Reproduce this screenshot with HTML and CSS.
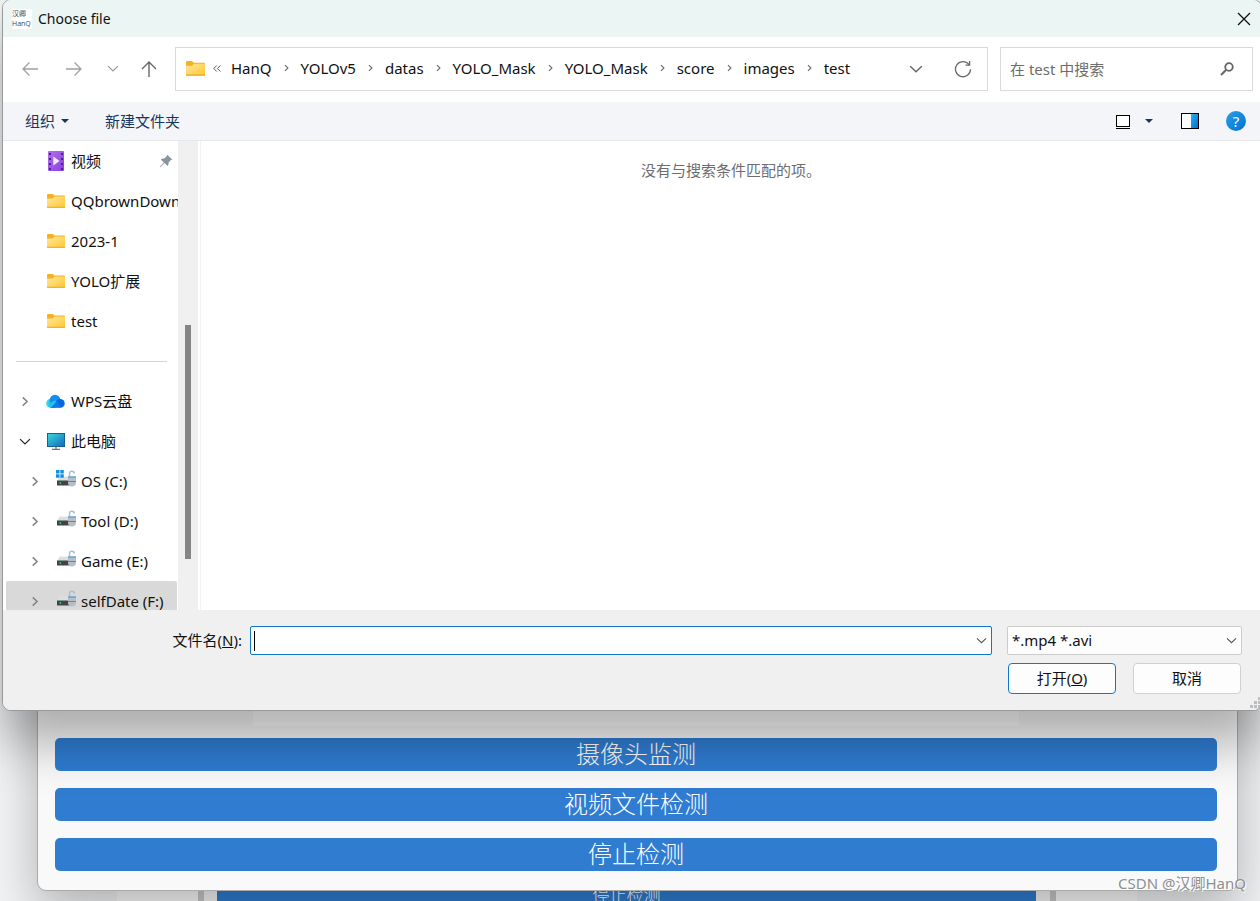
FILE: index.html
```html
<!DOCTYPE html>
<html lang="zh-CN">
<head>
<meta charset="utf-8">
<title>Choose file</title>
<link rel="stylesheet" href="styles.css">
</head>
<body>
<svg class="defs" width="0" height="0" aria-hidden="true">
  <defs>
    <linearGradient id="gFolder" x1="0" y1="0" x2="1" y2="1"><stop offset="0" stop-color="#ffe69c"/><stop offset="1" stop-color="#ffc933"/></linearGradient>
    <linearGradient id="gVideo" x1="0" y1="0" x2="1" y2="1"><stop offset="0" stop-color="#b070f0"/><stop offset="1" stop-color="#8a40e0"/></linearGradient>
    <linearGradient id="gScreen" x1="0" y1="0" x2="1" y2="1"><stop offset="0" stop-color="#35dbe0"/><stop offset="1" stop-color="#1467b8"/></linearGradient>
    <linearGradient id="gCloud" x1="0" y1="0" x2="1" y2="0"><stop offset="0" stop-color="#35e8d8"/><stop offset="1" stop-color="#1b8cf5"/></linearGradient>
    <linearGradient id="gBlue" x1="0" y1="0" x2="1" y2="1"><stop offset="0" stop-color="#2bb0ef"/><stop offset="1" stop-color="#0070d2"/></linearGradient>
    <symbol id="folder" viewBox="0 0 18 14"><path d="M0 1.2Q0 0 1.2 0H5.5L7.4 1.6H17Q18 1.6 18 2.6V13H0Z" fill="#f5b11f"/><path d="M0 4.4H5.6L7.6 2.6H18V13.2H0Z" fill="url(#gFolder)"/><path d="M0 13.3H18" stroke="#e8a317" stroke-width="1"/></symbol>
    <symbol id="chevron" viewBox="0 0 8 12"><path d="M1.5 1.5L6.3 6L1.5 10.5" fill="none" stroke="currentColor" stroke-width="1.7"/></symbol>
    <symbol id="down" viewBox="0 0 14 8"><path d="M1.2 1.2L7 6.7L12.8 1.2" fill="none" stroke="currentColor" stroke-width="1.4"/></symbol>
    <symbol id="drive" viewBox="0 0 20 18"><path d="M3.5 6.5H13V11H1.2Z" fill="#dcdfe2"/><rect x="1" y="10.5" width="13" height="5" fill="#3f4446"/><rect x="3.5" y="12.2" width="1.6" height="1.6" fill="#2fe04c"/><path d="M13.5 6.5V3.2Q13.5 1.2 15.8 1.2Q18.4 1.2 18.4 3.6" fill="none" stroke="#b4bdc5" stroke-width="1.5"/><path d="M12 6.5H20V12.5Q20 16.5 16 16.5Q12 16.5 12 12.5Z" fill="#b6bfc7"/><path d="M12 7H20M12 11.5H20" stroke="#2b99de" stroke-width="1.1"/></symbol>
  </defs>
</svg>

<div class="desktop">
  <div class="back-page">
    <div class="back-card"><button class="back-button" type="button">停止检测</button></div>
  </div>

  <section class="app-window">
    <div class="preview"></div>
    <button class="action" type="button">摄像头监测</button>
    <button class="action" type="button">视频文件检测</button>
    <button class="action" type="button">停止检测</button>
  </section>

  <section class="dialog" role="dialog" aria-labelledby="dialog-title">
    <header class="titlebar">
      <span class="app-icon" aria-hidden="true"><span>汉卿</span><span>HanQ</span></span>
      <h1 id="dialog-title">Choose file</h1>
      <button class="close" type="button" aria-label="Close"><svg width="14" height="14" viewBox="0 0 14 14"><path d="M1 1L13 13M13 1L1 13" fill="none" stroke="#111" stroke-width="1.3"/></svg></button>
    </header>

    <div class="nav">
      <button class="nav-button" type="button" aria-label="Back"><svg width="16" height="14" viewBox="0 0 16 14"><path d="M16 7H1M7.5 .5L1 7L7.5 13.5" fill="none" stroke="#a0a0a0" stroke-width="1.3"/></svg></button>
      <button class="nav-button" type="button" aria-label="Forward"><svg width="16" height="14" viewBox="0 0 16 14"><path d="M0 7H15M8.5 .5L15 7L8.5 13.5" fill="none" stroke="#a0a0a0" stroke-width="1.3"/></svg></button>
      <button class="nav-button recent" type="button" aria-label="Recent"><svg width="12" height="7"><use href="#down"/></svg></button>
      <button class="nav-button up" type="button" aria-label="Up"><svg width="16" height="16" viewBox="0 0 16 16"><path d="M8 16V1M1 8L8 1L15 8" fill="none" stroke="#666" stroke-width="1.4"/></svg></button>
      <div class="address">
        <svg width="19" height="15"><use href="#folder"/></svg>
        <svg class="more" width="8" height="7" viewBox="0 0 8 7"><path d="M3.8 .5L.8 3.5L3.8 6.5M7.4 .5L4.4 3.5L7.4 6.5" fill="none" stroke="#555" stroke-width="1"/></svg>
        <nav class="crumbs" aria-label="Path">
          <a href="#">HanQ</a><svg width="5" height="8"><use href="#chevron"/></svg>
          <a href="#">YOLOv5</a><svg width="5" height="8"><use href="#chevron"/></svg>
          <a href="#">datas</a><svg width="5" height="8"><use href="#chevron"/></svg>
          <a href="#">YOLO_Mask</a><svg width="5" height="8"><use href="#chevron"/></svg>
          <a href="#">YOLO_Mask</a><svg width="5" height="8"><use href="#chevron"/></svg>
          <a href="#">score</a><svg width="5" height="8"><use href="#chevron"/></svg>
          <a href="#">images</a><svg width="5" height="8"><use href="#chevron"/></svg>
          <a href="#">test</a>
        </nav>
        <button class="plain" type="button" aria-label="History"><svg width="14" height="8"><use href="#down"/></svg></button>
        <button class="plain" type="button" aria-label="Refresh"><svg width="18" height="18" viewBox="0 0 18 18"><path d="M15.2 5A7.5 7.5 0 1 0 16.5 9.2" fill="none" stroke="#6c6c6c" stroke-width="1.3"/><path d="M11.5 5.2H15.6V1" fill="none" stroke="#6c6c6c" stroke-width="1.3"/></svg></button>
      </div>
      <div class="search">
        <input type="text" aria-label="搜索" placeholder="在 test 中搜索">
        <svg width="14" height="14" viewBox="0 0 14 14"><circle cx="9" cy="5" r="3.8" fill="none" stroke="#666" stroke-width="1.8"/><path d="M6.2 7.8L1 13" stroke="#666" stroke-width="2"/></svg>
      </div>
    </div>

    <div class="toolbar">
      <button class="command" type="button">组织<svg width="8" height="4" viewBox="0 0 8 4"><path d="M0 0H8L4 4Z" fill="#17365f"/></svg></button>
      <button class="command" type="button">新建文件夹</button>
      <div class="views">
        <button class="plain" type="button" aria-label="View"><svg width="14" height="15" viewBox="0 0 14 15"><rect x=".5" y="1.5" width="13" height="11" fill="#fff" stroke="#000"/><path d="M0 14.5H14" stroke="#000"/></svg></button>
        <button class="plain" type="button" aria-label="View options"><svg width="8" height="4" viewBox="0 0 8 4"><path d="M0 0H8L4 4Z" fill="#17365f"/></svg></button>
        <button class="plain pane" type="button" aria-label="Preview pane"><svg width="18" height="16" viewBox="0 0 18 16"><rect x=".5" y=".5" width="17" height="15" fill="#fff" stroke="#000"/><path d="M10 1H17V15H10Z" fill="url(#gBlue)"/></svg></button>
        <button class="help" type="button" aria-label="Help">?</button>
      </div>
    </div>

    <div class="content">
      <aside class="tree">
        <ul>
          <li class="quick"><svg width="18" height="20" viewBox="0 0 18 20"><rect x="1" width="16" height="20" rx="1" fill="url(#gVideo)"/><path d="M3 2V19M15 2V19" stroke="#4c2388" stroke-width="2" stroke-dasharray="2 3"/><path d="M6.3 5.5L12.5 10L6.3 14.5Z" fill="#f4ecfb"/></svg><span>视频</span><svg class="pin" width="14" height="14" viewBox="0 0 14 14"><path d="M8.2.8L13.2 5.6L11.4 6.6L9.5 8.8Q9.7 11 8.6 12L5.5 9L1.2 13.3L.7 12.8L4.9 8.4L1.8 5.4Q3.3 4.2 5.2 4.5L7.5 2.6Z" fill="#8a969e"/></svg></li>
          <li class="quick"><svg width="18" height="14"><use href="#folder"/></svg><span>QQbrownDownload</span></li>
          <li class="quick"><svg width="18" height="14"><use href="#folder"/></svg><span>2023-1</span></li>
          <li class="quick"><svg width="18" height="14"><use href="#folder"/></svg><span>YOLO扩展</span></li>
          <li class="quick"><svg width="18" height="14"><use href="#folder"/></svg><span>test</span></li>
          <li class="divider" role="separator"></li>
          <li><svg class="twist" width="8" height="11"><use href="#chevron"/></svg><svg width="19" height="15" viewBox="0 0 20 15"><circle cx="5" cy="9.5" r="4.8" fill="url(#gCloud)"/><circle cx="9.5" cy="6" r="5.6" fill="#128df0"/><path d="M4 10Q9 4 14 8L11 14H5Z" fill="#25c1ec"/><circle cx="15" cy="9.5" r="4.7" fill="#0b66dc"/><path d="M5 14.3L12 6.5L15 14.2Z" fill="#0b7bea"/></svg><span>WPS云盘</span></li>
          <li><svg class="twist open" width="12" height="7"><use href="#down"/></svg><svg width="18" height="17" viewBox="0 0 18 17"><rect x=".5" y=".5" width="17" height="13" fill="url(#gScreen)" stroke="#17618c"/><path d="M9 14V16M5 16.3H13" stroke="#68747c" stroke-width="1.3"/></svg><span>此电脑</span></li>
          <li class="child"><svg class="twist" width="8" height="11"><use href="#chevron"/></svg><svg class="disk" width="20" height="18" viewBox="0 0 20 18"><use href="#drive"/><path d="M0 0H3.5V3.5H0ZM4.3 0H7.8V3.5H4.3ZM0 4.3H3.5V7.8H0ZM4.3 4.3H7.8V7.8H4.3Z" fill="#1591df"/></svg><span>OS (C:)</span></li>
          <li class="child"><svg class="twist" width="8" height="11"><use href="#chevron"/></svg><svg class="disk" width="20" height="18"><use href="#drive"/></svg><span>Tool (D:)</span></li>
          <li class="child"><svg class="twist" width="8" height="11"><use href="#chevron"/></svg><svg class="disk" width="20" height="18"><use href="#drive"/></svg><span>Game (E:)</span></li>
          <li class="child selected"><svg class="twist" width="8" height="11"><use href="#chevron"/></svg><svg class="disk" width="20" height="18"><use href="#drive"/></svg><span>selfDate (F:)</span></li>
        </ul>
      </aside>
      <div class="scrollbar"><div class="thumb"></div></div>
      <main class="files">没有与搜索条件匹配的项。</main>
    </div>

    <footer class="footer">
      <label for="filename">文件名(<u>N</u>):</label>
      <div class="combo filename"><input id="filename" type="text"><svg width="11" height="7"><use href="#down"/></svg><i class="caret"></i></div>
      <div class="combo filter"><select aria-label="文件类型"><option>*.mp4 *.avi</option></select><svg width="11" height="7"><use href="#down"/></svg></div>
      <div class="buttons">
        <button class="primary" type="button">打开(<u>O</u>)</button>
        <button type="button">取消</button>
      </div>
      <svg class="grip" width="10" height="12" viewBox="0 0 10 12"><path d="M0 8H3V11H0ZM4 8H7V11H4ZM8 8H10V11H8ZM4 4H7V7H4ZM8 4H10V7H8ZM8 0H10V3H8Z" fill="#bdbdbd"/></svg>
    </footer>
  </section>

  <div class="watermark">CSDN @汉卿HanQ</div>
</div>
</body>
</html>
```
FILE: styles.css
```css
* { box-sizing: border-box; }

body {
  margin: 0;
  font: 15px/20px "Noto Sans", "Noto Sans CJK SC", sans-serif;
  color: #111;
}

button, input, select { font: inherit; color: inherit; }
button { padding: 0; border: 0; background: none; }
svg { display: block; flex: none; }
.defs { position: absolute; }

.desktop {
  position: relative;
  height: 100vh;
  overflow: hidden;
  background: #f1f3f5;
}

/* Page behind both windows */
.back-page {
  position: absolute;
  inset: auto 123px 0 117px;
  height: 30px;
  padding: 0 81px;
  background: #fafafa;
}
.back-card {
  height: 100%;
  padding: 0 14px 0 13px;
  border: solid #c8c8c8;
  border-width: 0 6px;
  background: #f5f5f5;
}
.back-button {
  width: 100%;
  height: 33px;
  background: #2f7cd1;
  color: #fff;
  font: 300 17px/46px "Noto Sans CJK SC", sans-serif;
}

/* Application window */
.app-window {
  position: absolute;
  inset: 0 22px 10px 37px;
  display: flex;
  flex-direction: column;
  justify-content: flex-end;
  gap: 17px;
  padding: 0 20px 19px 17px;
  border: 1px solid #a9abab;
  border-radius: 9px;
  background: #f9f9f9;
  box-shadow: 0 20px 50px rgba(0, 0, 0, .28);
}
.preview {
  flex: 1;
  width: 66%;
  margin: 0 auto -5px;
  background: #fff;
}
.action {
  height: 33px;
  padding-bottom: 3px;
  border-radius: 5px;
  background: #2f7cd1;
  color: #fff;
  font: 300 24px/30px "Noto Sans CJK SC", sans-serif;
}

/* File dialog */
.dialog {
  position: absolute;
  inset: -1px -2px 190px 2px;
  display: flex;
  flex-direction: column;
  overflow: hidden;
  border: 1px solid #999;
  border-radius: 9px;
  background: #fff;
  box-shadow: 0 32px 50px rgba(0, 0, 0, .31);
}
.titlebar {
  display: flex;
  align-items: center;
  gap: 6px;
  height: 37px;
  padding: 0 10px 0 9px;
  background: #eaf5f4;
}
.app-icon {
  display: flex;
  flex-direction: column;
  justify-content: space-between;
  width: 20px;
  height: 20px;
  background: #fff;
  color: #444;
  font: 7px/10px "Open Sans", "Noto Sans CJK SC", sans-serif;
}
.titlebar h1 {
  margin: 0;
  font-size: 14px;
  font-weight: 400;
}
.close { margin-left: auto; }

.nav {
  display: flex;
  align-items: center;
  height: 65px;
  padding: 0 8px 2px 5px;
}
.nav-button {
  display: grid;
  place-items: center;
  width: 44px;
  height: 44px;
}
.recent { width: 33px; color: #999; }
.up { width: 39px; }
.address {
  display: flex;
  flex: 1;
  align-items: center;
  height: 44px;
  margin: 0 12px 0 7px;
  padding: 0 15px 0 10px;
  border: 1px solid #d9d9d9;
}
.more { margin: 0 10px 0 8px; }
.crumbs {
  display: flex;
  align-items: center;
  gap: 12px;
  padding-bottom: 2px;
  color: #666;
}
.crumbs a { color: #111; text-decoration: none; }
.plain { display: grid; place-items: center; color: #666; }
.address .plain:first-of-type { margin: 0 31px 0 auto; }
.search {
  display: flex;
  align-items: center;
  width: 253px;
  height: 44px;
  padding: 0 18px 0 9px;
  border: 1px solid #d9d9d9;
}
.search input {
  flex: 1;
  min-width: 0;
  padding: 0;
  border: 0;
  outline: 0;
  background: none;
}
.search input::placeholder { color: #6d6d6d; opacity: 1; }

.toolbar {
  display: flex;
  align-items: center;
  gap: 36px;
  height: 39px;
  padding: 0 15px 0 22px;
  border-bottom: 1px solid #e6e7e9;
  background: #f4f5f8;
  color: #17365f;
}
.command { display: flex; align-items: center; gap: 6px; }
.views { display: flex; align-items: center; margin-left: auto; gap: 15px; }
.pane { margin: 0 12px 0 13px; }
.help {
  width: 20px;
  height: 20px;
  border-radius: 50%;
  background: linear-gradient(135deg, #28a0e8, #0072d0);
  color: #fff;
}

.content {
  display: flex;
  flex: 1;
  min-height: 0;
}
.tree { width: 175px; overflow: hidden; }
.tree ul { margin: 0; padding: 0 1px 0 3px; list-style: none; }
.tree li {
  display: flex;
  align-items: center;
  height: 40px;
  padding-left: 15px;
  white-space: nowrap;
}
.tree span { margin-left: 6px; }
.tree li.quick { padding-left: 41px; }
.tree .pin { margin: 0 4px 0 auto; }
.tree li.divider { padding: 0 10px; }
.divider::before { content: ""; flex: 1; height: 1px; background: #d5d5d5; }
.twist { margin-right: 17px; color: #858585; }
.twist.open { margin: 0 16px 0 -2px; color: #222; }
.tree li.child { padding-left: 25px; }
.child .twist { margin-right: 17px; }
.child span { margin-left: 5px; }
.disk { margin-top: -4px; }
.selected { border-radius: 2px; background: #d9d9d9; }
.scrollbar {
  display: grid;
  grid-template-rows: 184fr 234fr 51fr;
  width: 20px;
  padding: 0 7px;
  background: #f0f0f0;
}
.thumb { grid-row: 2; background: #858585; }
.files {
  flex: 1;
  margin-left: 2px;
  padding: 19px 20px;
  border-left: 1px solid #f2f2f2;
  color: #6d6d6d;
  text-align: center;
}

.footer {
  position: relative;
  display: grid;
  grid-template-columns: 239px 749fr 235fr;
  column-gap: 8px;
  row-gap: 8px;
  align-items: center;
  height: 100px;
  padding: 16px 19px 16px 0;
  background: #f0f0f0;
}
.footer label { padding-bottom: 2px; text-align: right; }
.combo {
  position: relative;
  display: flex;
  align-items: center;
  color: #555;
}
.combo input, .combo select {
  width: 100%;
  height: 29px;
  padding: 0 24px 2px 4px;
  border: 1px solid #ccc;
  border-radius: 2px;
  outline: 0;
  appearance: none;
  background: #fdfdfd;
  color: #111;
}
.combo svg { position: absolute; right: 5px; }
.filename { margin-right: 7px; }
.combo input { border-color: #0f78c8; background: #fff; }
.caret { position: absolute; left: 4px; width: 1px; height: 20px; background: #000; }
.buttons {
  display: grid;
  grid-column: 3;
  grid-template-columns: 1fr 1fr;
  gap: 17px;
  margin: 0 1px;
}
.buttons button {
  height: 31px;
  padding-bottom: 2px;
  border: 1px solid #d0d0d0;
  border-radius: 4px;
  background: #fdfdfd;
}
.buttons .primary { border-color: #0f78c8; }
.grip { position: absolute; right: 1px; bottom: 1px; }

.watermark {
  position: absolute;
  right: 14px;
  bottom: 8px;
  color: #8f8f8f;
  text-shadow: 1px 1px 0 #fff;
}
```
